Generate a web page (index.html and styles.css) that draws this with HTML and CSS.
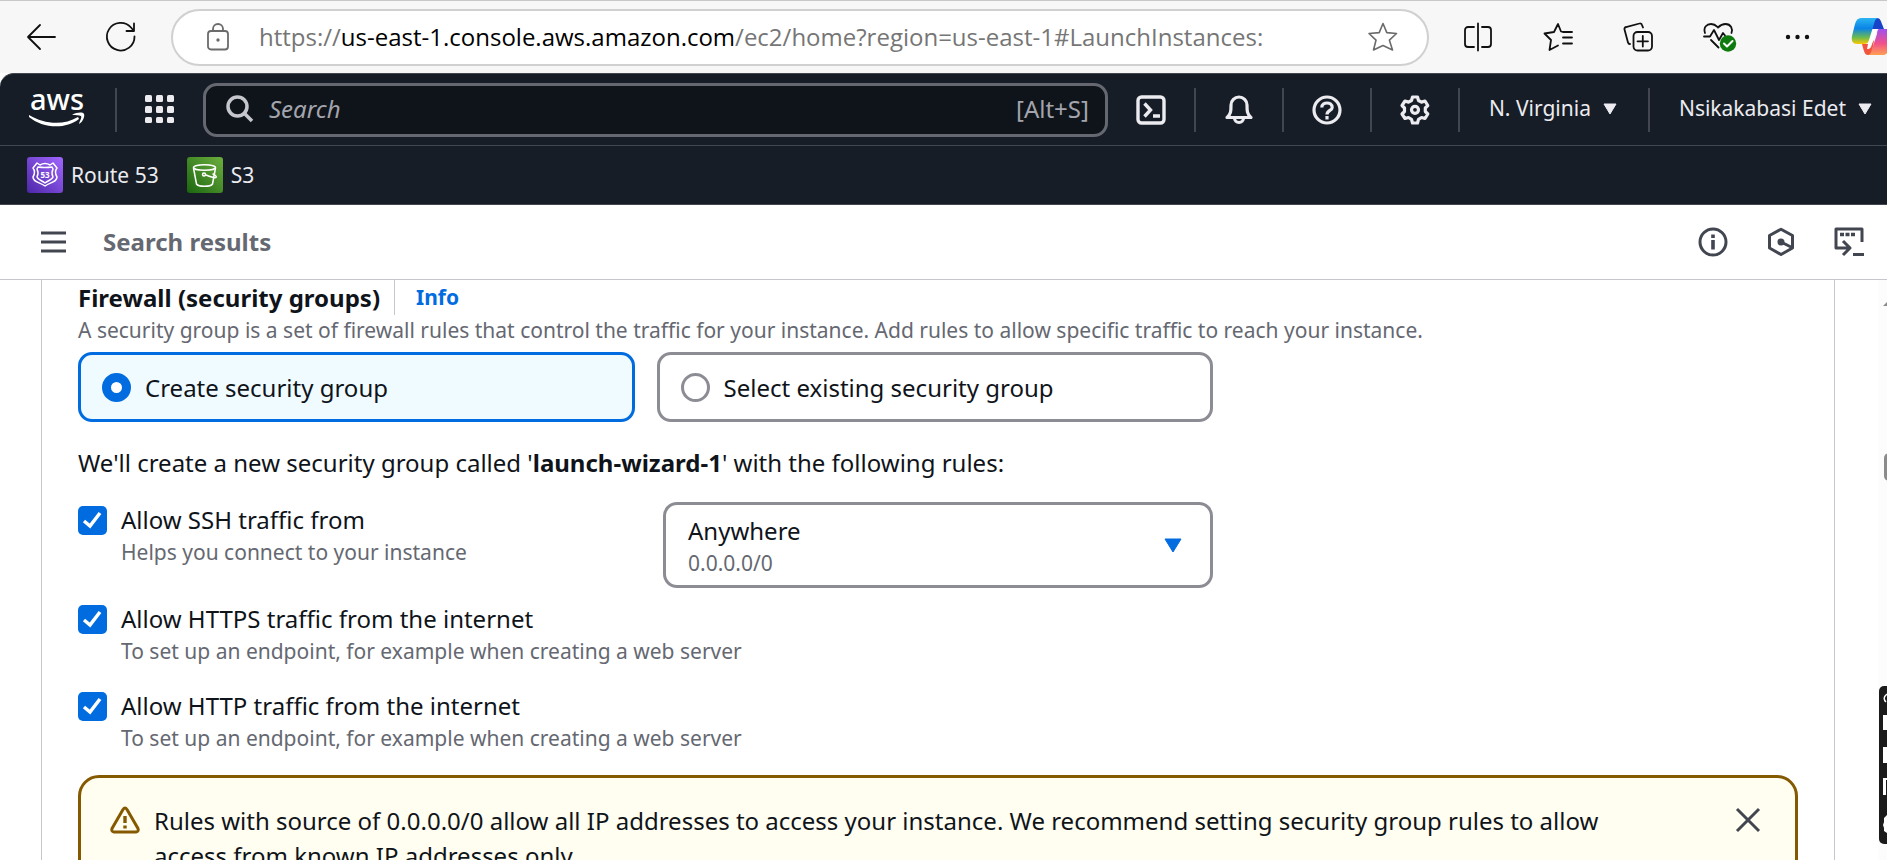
FILE: index.html
```html
<!DOCTYPE html>
<html lang="en">
<head>
<meta charset="utf-8">
<title>Launch an instance | EC2</title>
<link rel="stylesheet" href="styles.css">
</head>
<body>
<div class="app">
  <div class="browser">
    <button class="plain back" aria-label="Back"><svg width="30" height="30" viewBox="0 0 30 30" fill="none" stroke="#111" stroke-width="1.8" stroke-linecap="round" stroke-linejoin="round"><path d="M29 15H2M14 3L2 15l12 12"/></svg></button>
    <button class="plain reload" aria-label="Refresh"><svg width="30" height="30" viewBox="0 0 30 30" fill="none" stroke="#111" stroke-width="1.8" stroke-linecap="round" stroke-linejoin="round"><path d="M28.500 14.500A13.800 13.800 0 1 1 25 5.500L28 9M28 1.500V9H20.500"/></svg></button>
    <div class="address">
      <svg class="lock" width="24" height="28" viewBox="0 0 24 28" fill="none" stroke="#6b6b6b" stroke-width="1.8"><rect x="2" y="8" width="20" height="18.500" rx="3"/><path d="M7 8V6a5 5 0 0 1 10 0v2"/><circle cx="12" cy="17" r="1.700" fill="#6b6b6b" stroke="none"/></svg>
      <span class="url">https://<b>us-east-1.console.aws.amazon.com</b>/ec2/home?region=us-east-1#LaunchInstances:</span>
      <button class="plain" aria-label="Add to favorites"><svg width="30" height="30" viewBox="0 0 30 30" fill="none" stroke="#6b6b6b" stroke-width="1.6" stroke-linejoin="round"><path d="M15 1.500L18.800 10.600L28.500 11.500L21.400 18.200L24.500 28L15 23.500L5.500 28L8 18.200L1 11.500L11.200 10.600Z"/></svg></button>
    </div>
    <div class="browser-tools">
      <button class="plain" aria-label="Split screen"><svg width="30" height="30" viewBox="0 0 30 30" fill="none" stroke="#111" stroke-width="1.8" stroke-linecap="round"><path d="M15 1.500v27M11 5H5a3 3 0 0 0-3 3v14a3 3 0 0 0 3 3h6M19 5h6a3 3 0 0 1 3 3v14a3 3 0 0 1-3 3h-6"/></svg></button>
      <button class="plain" aria-label="Favorites"><svg width="30" height="30" viewBox="0 0 30 30" fill="none" stroke="#111" stroke-width="1.8" stroke-linecap="round" stroke-linejoin="round"><path d="M20 10L18 9.500L15 2L11 10L1.500 11.500L8 18L6.500 28L15 23.500M20 10h9M20 15.500h9M20 21.500h9"/></svg></button>
      <button class="plain" aria-label="Collections"><svg width="30" height="30" viewBox="0 0 30 30" fill="none" stroke="#111" stroke-width="1.800" stroke-linecap="round"><rect x="10.500" y="10" width="18.500" height="18.500" rx="4"/><path d="M19.800 14v10.500M14.500 19.300H25M20 5.500L19 3a2 2 0 0 0-2.500-1.500L3 5a2 2 0 0 0-1.500 2.500L5 20.500a2 2 0 0 0 2 1.500"/></svg></button>
      <button class="plain heart" aria-label="Browser essentials"><svg width="34" height="32" viewBox="0 0 34 32" fill="none" stroke="#111" stroke-width="1.800" stroke-linecap="round" stroke-linejoin="round"><path d="M2 12C0 6 4 3 8 3c4 0 5 1.500 7 3.500C17 4.500 19 3 22.500 3C28 3 30 8 28.500 12M1 15.500h6L11 9l5 10 4-7 2 2.500M8 19l7.500 7.500"/><circle cx="25" cy="22.500" r="8.200" fill="#0f7b0f" stroke="none"/><path d="M21 22.500l3 3 5.500-5.500" stroke="#fff" stroke-width="2"/></svg></button>
      <button class="plain" aria-label="Settings and more"><svg width="30" height="30" viewBox="0 0 30 30" fill="#111"><circle cx="5" cy="15" r="2.200"/><circle cx="14.500" cy="15" r="2.200"/><circle cx="24" cy="15" r="2.200"/></svg></button>
    </div>
    <button class="plain copilot" aria-label="Copilot"><svg width="40" height="40" viewBox="0 0 40 40">
      <defs>
        <linearGradient id="c1" x1="0" y1="0" x2="0" y2="1"><stop offset="0" stop-color="#2bb5f0"/><stop offset=".4" stop-color="#0a84e8"/><stop offset=".75" stop-color="#6cbb50"/><stop offset="1" stop-color="#ffc800"/></linearGradient>
        <linearGradient id="c2" x1="0" y1="0" x2="0" y2="1"><stop offset="0" stop-color="#a050f0"/><stop offset=".55" stop-color="#f0508c"/><stop offset="1" stop-color="#ffa050"/></linearGradient>
      </defs>
      <path d="M20 1h6c3 0 4 3 5 6l2 5h-7c-4 0-5 3-6 7z" fill="#1843c8"/>
      <path d="M11 27h9l3-4-2 13c-1 2-2 2-4 2-3 0-4-3-6-11z" fill="#f1553d"/>
      <path d="M20 12h6l-5 15c-1 4-2 5-5 5z" fill="#fff"/>
      <path d="M10 1h18c-3 0-4 2-5 6l-5 16c-1 3-2 4-5 4H6c-4 0-6-3-5-8L4 7c1-4 3-6 6-6z" fill="url(#c1)"/>
      <path d="M28 12h8c5 0 7 3 5 9l-3 11c-1 4-3 6-7 6H16c3 0 4-2 5-6l5-15c0-3 1-5 2-5z" fill="url(#c2)"/>
    </svg></button>
  </div>

  <header class="header">
    <div class="nav">
      <a class="logo" href="#" aria-label="AWS home"><svg width="58" height="40" viewBox="0 0 58 40"><text x="29" y="20" text-anchor="middle" class="logo-text">aws</text><path d="M1 25c15 9 34 11 49 2l1 2C37 40 14 38 1 27z" fill="#fff"/><path d="M44 25c5-3 11-3 12-1s-1 8-5 10c1-4 3-6 2-8-2-1-5-1-9-1z" fill="#fff"/></svg></a>
      <span class="rule logo-rule"></span>
      <button class="plain apps" aria-label="Services"><svg width="30" height="29" viewBox="0 0 30 29" fill="#ebebf0"><rect width="7" height="7" rx="1.500"/><rect x="11" width="7" height="7" rx="1.500"/><rect x="22" width="7" height="7" rx="1.500"/><rect y="11" width="7" height="7" rx="1.500"/><rect x="11" y="11" width="7" height="7" rx="1.500"/><rect x="22" y="11" width="7" height="7" rx="1.500"/><rect y="22" width="7" height="6" rx="1.500"/><rect x="11" y="22" width="7" height="6" rx="1.500"/><rect x="22" y="22" width="7" height="6" rx="1.500"/></svg></button>
      <label class="search"><svg width="28" height="28" viewBox="0 0 28 28" fill="none" stroke="#c6c6cd" stroke-width="3.500"><circle cx="11.500" cy="11.500" r="9.500"/><path d="M18 18l8 8"/></svg><input type="text" placeholder="Search" aria-label="Search"><span class="hint">[Alt+S]</span></label>
      <div class="nav-tools">
        <button class="plain tool" aria-label="CloudShell"><svg width="30" height="30" viewBox="0 0 30 30" fill="none" stroke="#ebebf0" stroke-width="3.400"><rect x="2" y="2" width="26" height="26" rx="3.500"/><path d="M8.500 8.500l6 6.500-6 6.500M17 21h7"/></svg></button>
        <button class="plain tool" aria-label="Notifications"><svg width="30" height="30" viewBox="0 0 30 30" fill="none" stroke="#ebebf0" stroke-width="3.200" stroke-linejoin="round"><path d="M3 22.500c4-3 4-7 4-12.500a8 8 0 0 1 16 0c0 5.500 0 9.500 4 12.500zM10.500 23a4.500 4.500 0 0 0 9 0"/></svg></button>
        <button class="plain tool" aria-label="Help"><svg width="30" height="30" viewBox="0 0 30 30" fill="none" stroke="#ebebf0" stroke-width="3.200"><circle cx="15" cy="15" r="13"/><path d="M9.800 12.500c0-6 10.400-6 10.400 0 0 3-5.200 3-5.200 7M15 21v3.500" /></svg></button>
        <button class="plain tool" aria-label="Settings"><svg width="30" height="30" viewBox="0 0 30 30" fill="none" stroke="#ebebf0" stroke-width="3.200" stroke-linejoin="round"><path d="M12.500 2h5l1 3.500 3 1.600L25 6l2.800 4.500-2.500 2.500v3.500l2.500 2.500-2.800 4.500-3.500-1-3 1.800-1 3.700h-5l-1-3.700-3-1.800-3.500 1L2 19l2.500-2.500V13L2 10.500 5 6l3.500 1.100 3-1.600z"/><circle cx="15" cy="14.800" r="3.500"/></svg></button>
        <button class="plain menu">N. Virginia <svg width="14" height="12" viewBox="0 0 14 12" fill="#ebebf0" stroke="#ebebf0" stroke-linejoin="round"><path d="M1 1h12L7 11z"/></svg></button>
        <button class="plain menu">Nsikakabasi Edet <svg width="14" height="12" viewBox="0 0 14 12" fill="#ebebf0" stroke="#ebebf0" stroke-linejoin="round"><path d="M1 1h12L7 11z"/></svg></button>
      </div>
    </div>
    <div class="favorites">
      <a href="#"><svg width="36" height="36" viewBox="0 0 36 36"><defs><linearGradient id="p" x1="0" y1="1" x2="1" y2="0"><stop stop-color="#4d27a8"/><stop offset="1" stop-color="#a166ff"/></linearGradient></defs><rect width="36" height="36" rx="3" fill="url(#p)"/><g fill="none" stroke="#fff" stroke-width="1.500" stroke-linejoin="round"><path d="M10 6l3 2q5-3 10 0l3-2 4 5q-3 4 0 9c0 5-6 5-12 9-6-4-12-4-12-9q3-5 0-9z"/><path d="M11 10q7 1 14 0l1 2q-2 4 0 8c-1 3-4 3-8 6-4-3-7-3-8-6q2-4 0-8z"/></g><text x="18" y="21" text-anchor="middle" class="shield-text">53</text></svg>Route 53</a>
      <a href="#"><svg width="36" height="36" viewBox="0 0 36 36"><defs><linearGradient id="g" x1="0" y1="1" x2="1" y2="0"><stop stop-color="#1b660f"/><stop offset="1" stop-color="#6cae3e"/></linearGradient></defs><rect width="36" height="36" rx="3" fill="url(#g)"/><g fill="none" stroke="#fff" stroke-width="1.500" stroke-linecap="round" stroke-linejoin="round"><ellipse cx="17.500" cy="10.500" rx="11" ry="2.800"/><path d="M6.500 11l3 16c2 3 14 3 16 0l3-16"/><circle cx="17" cy="17.500" r="1.500"/><path d="M19 18c5 2 9 3.500 10 2.500s-1-2.500-3-3.500"/></g></svg>S3</a>
    </div>
  </header>

  <div class="toolbar">
    <button class="plain burger" aria-label="Open navigation"><svg width="25" height="23" viewBox="0 0 25 23" stroke="#424650" stroke-width="3"><path d="M0 2h25M0 11h25M0 20h25"/></svg></button>
    <strong class="crumb">Search results</strong>
    <div class="panel-tools">
      <button class="plain" aria-label="Info panel"><svg width="30" height="30" viewBox="0 0 30 30" fill="none" stroke="#424650" stroke-width="3"><circle cx="15" cy="15" r="13"/><path d="M15 7.500v3.500M15 13v9.500" stroke-width="3.600"/></svg></button>
      <button class="plain" aria-label="Amazon Q"><svg width="30" height="30" viewBox="0 0 30 30" fill="none" stroke="#424650" stroke-width="3" stroke-linejoin="round"><path d="M15 2.200L26.500 8.500v12.500L15 27.500 3.500 21V8.500zM15 15l11 5.500"/><circle cx="15" cy="15" r="3.500" fill="#424650" stroke="none"/></svg></button>
      <button class="plain" aria-label="CloudShell panel"><svg width="30" height="30" viewBox="0 0 30 30" fill="none" stroke="#424650" stroke-width="3"><path d="M28 15V2H2v19h13M9 14l7 7-7 7M19 27.500h11" stroke-linejoin="round"/><path d="M6 7.500h15" stroke-width="3.500" stroke-dasharray="4 1.500"/></svg></button>
    </div>
  </div>

  <main class="viewport">
    <form class="panel">
      <div class="title"><h2>Firewall (security groups)</h2><a href="#">Info</a></div>
      <p class="muted">A security group is a set of firewall rules that control the traffic for your instance. Add rules to allow specific traffic to reach your instance.</p>
      <div class="tiles">
        <label class="tile"><input type="radio" name="sg" checked>Create security group</label>
        <label class="tile"><input type="radio" name="sg">Select existing security group</label>
      </div>
      <p class="note">We'll create a new security group called '<b>launch-wizard-1</b>' with the following rules:</p>
      <div class="rules">
        <div class="ssh">
          <div class="check"><input type="checkbox" id="ssh" checked><label for="ssh">Allow SSH traffic from<small>Helps you connect to your instance</small></label></div>
          <button type="button" class="source" aria-haspopup="listbox" aria-label="Source: Anywhere 0.0.0.0/0"><span>Anywhere<small>0.0.0.0/0</small></span><svg width="18" height="15" viewBox="0 0 18 15" fill="#006ce0" stroke="#006ce0" stroke-linejoin="round"><path d="M1 1h16L9 14z"/></svg></button>
        </div>
        <div class="web">
          <div class="check"><input type="checkbox" id="https" checked><label for="https">Allow HTTPS traffic from the internet<small>To set up an endpoint, for example when creating a web server</small></label></div>
          <div class="check"><input type="checkbox" id="http" checked><label for="http">Allow HTTP traffic from the internet<small>To set up an endpoint, for example when creating a web server</small></label></div>
        </div>
      </div>
      <div class="alert">
        <svg class="warn" width="30" height="28" viewBox="0 0 30 28" fill="none" stroke="#855900" stroke-width="3" stroke-linejoin="round"><path d="M13 3.500q2-3 4 0l11 19q1 3-2 3.500H4q-3-.5-2-3.500z"/><path d="M15 10v7M15 19.500v3" stroke-width="3.400"/></svg>
        <p>Rules with source of 0.0.0.0/0 allow all IP addresses to access your instance. We recommend setting security group rules to allow access from known IP addresses only.</p>
        <button type="button" class="plain" aria-label="Dismiss"><svg width="24" height="24" viewBox="0 0 24 24" stroke="#424650" stroke-width="3"><path d="M1 1l22 22M23 1L1 23"/></svg></button>
      </div>
    </form>
    <div class="scroll" aria-hidden="true"><svg class="arrow" width="8" height="8" viewBox="0 0 8 8" fill="#8b8b8b"><path d="M0 4L4 0v4z"/></svg><span class="thumb"></span></div>
    <div class="float" aria-hidden="true"><svg width="8" height="158" viewBox="0 0 8 158" fill="#fff"><path d="M8 8q-5 4-1 8" stroke="#fff" fill="none" stroke-width="1.500"/><path d="M4 29h4v15H4zM4 61h4v16H4zM4 92h4v2H7v15H4zM8 129l-3 3v4l-1 3 1 3v3l3 2z"/></svg></div>
  </main>
</div>
</body>
</html>
```
FILE: styles.css
```css
* { box-sizing: border-box; }
body { margin: 0; background: #fff; color: #0f141a; font: 24px/35px "Noto Sans", "Open Sans", sans-serif; }
svg { display: block; flex: none; overflow: visible; }
p, h2 { margin: 0; }
a { color: #006ce0; text-decoration: none; }
.plain { border: 0; padding: 0; background: none; color: inherit; font: inherit; flex: none; }
.app { display: flex; flex-direction: column; height: 100vh; overflow: hidden; }

.browser { display: flex; align-items: center; height: 73px; padding-left: 26px; border-top: 1px solid #c8c8c8; background: #f7f7f7; flex: none; overflow: hidden; }
.reload { margin-left: 50px; }
.address { display: flex; align-items: center; flex: 1; height: 57px; margin-left: 35px; padding: 0 29px 0 33px; border: 2px solid #d0d0d0; border-radius: 29px; background: #fff; }
.url { flex: 1; margin-left: 29px; padding-bottom: 2px; color: #767676; font: 24px/35px "Open Sans", sans-serif; white-space: nowrap; }
.url b { color: #000; font-weight: 400; }
.browser-tools { display: flex; gap: 50px; margin-left: 34px; }
.heart { margin-right: -4px; }
.copilot { width: 36px; margin-left: 38px; overflow: hidden; }

.header { background: #161d26; color: #ebebf0; border-top: 1px solid #424650; border-bottom: 1px solid #424650; border-top-left-radius: 14px; flex: none; }
.nav { display: flex; align-items: center; height: 72px; padding-left: 28px; border-bottom: 1px solid #424650; }
.logo-text { font: 500 29px "Noto Sans", sans-serif; fill: #fff; }
.rule { width: 2px; height: 44px; background: #424650; }
.logo-rule { margin: 0 28px 0 29px; }
.search { display: flex; align-items: center; flex: 1; height: 54px; margin-left: 28px; padding: 0 16px 2px 20px; border: 3px solid #656871; border-radius: 14px; background: #0f141a; }
.search input { flex: 1; min-width: 0; margin-left: 15px; padding: 0; border: 0; outline: 0; background: none; color: #ebebf0; font: inherit; }
.search input::placeholder { color: #a4a4ad; font-style: italic; opacity: 1; }
.hint { color: #a4a4ad; }
.nav-tools { display: flex; align-items: center; font-size: 21px; }
.tool, .menu { display: flex; align-items: center; height: 44px; padding: 0 28px; border-left: 2px solid #424650; }
.tool:first-child { border: 0; }
.menu { gap: 12px; padding: 0 31px 2px 29px; }
.menu:last-child { padding-right: 15px; }
.favorites { display: flex; align-items: center; gap: 28px; height: 58px; padding-left: 27px; font-size: 21px; }
.favorites a { display: flex; align-items: center; gap: 8px; color: #ebebf0; }
.shield-text { font: 700 8px "Noto Sans", sans-serif; fill: #fff; }

.toolbar { display: flex; align-items: center; height: 75px; padding: 0 23px 0 41px; border-bottom: 1px solid #c6c6cd; flex: none; }
.crumb { flex: 1; margin-left: 37px; padding-bottom: 2px; color: #656871; }
.panel-tools { display: flex; gap: 38px; }

.viewport { position: relative; flex: 1; min-height: 0; padding: 0 52px 0 41px; overflow: hidden; }
.panel { padding: 0 36px; border: solid #c6c6cd; border-width: 0 1px; }
.title { display: flex; height: 35px; }
.title h2 { padding-right: 14px; border-right: 1px solid #c6c6cd; font-size: 24px; }
.title a { margin-left: 21px; font-size: 21px; font-weight: 700; }
.muted { color: #656871; font-size: 21px; line-height: 30px; }
.tiles { display: grid; grid-template-columns: 1fr 1fr; gap: 22px; width: 66%; margin-top: 7px; }
.tile { display: flex; align-items: center; gap: 14px; height: 70px; padding: 0 21px; border: 3px solid #8c8c94; border-radius: 14px; }
.tile:has(:checked) { border-color: #006ce0; background: #f0fbff; }
.tile input { appearance: none; width: 29px; height: 29px; margin: 0; border: 3px solid #8c8c94; border-radius: 50%; background: #fff; }
.tile input:checked { border: 9px solid #006ce0; }
.note { margin-top: 23px; }
.rules { display: flex; flex-direction: column; gap: 13px; margin-top: 22px; }
.ssh { display: grid; grid-template-columns: 585px 1fr; width: 66%; }
.web { display: grid; gap: 22px; }
.check { display: flex; align-items: flex-start; gap: 14px; }
.check input { appearance: none; width: 29px; height: 29px; margin: 4px 0 0; border-radius: 5px; background: #006ce0 url("data:image/svg+xml,%3Csvg xmlns='http://www.w3.org/2000/svg' viewBox='0 0 29 29'%3E%3Cpath d='M6 15l6 5L22 7' fill='none' stroke='%23fff' stroke-width='3.500'/%3E%3C/svg%3E"); }
small { display: block; color: #656871; font-size: 21px; line-height: 30px; }
.source { display: flex; align-items: center; justify-content: space-between; height: 86px; padding: 0 28px 0 22px; border: 3px solid #8c8c94; border-radius: 14px; background: #fff; color: inherit; font: inherit; text-align: left; }
.alert { display: flex; align-items: flex-start; margin-top: 22px; padding: 25px 35px 25px 29px; border: 3px solid #855900; border-radius: 21px; background: #fffef0; }
.warn { margin-top: 3px; }
.alert p { flex: 1; margin: 0 112px 0 14px; }
.alert button { margin-top: 5px; }

.scroll { position: absolute; top: 0; right: 0; bottom: 0; width: 9px; background: #fcfcfc; overflow: hidden; }
.arrow { position: absolute; top: 22px; left: 5px; }
.thumb { position: absolute; top: 173px; left: 6px; width: 10px; height: 28px; border-radius: 5px; background: #8b8b8b; }
.float { position: absolute; top: 406px; right: 0; width: 8px; border-radius: 5px 0 0 5px; background: #1b1b1b; overflow: hidden; }
```
